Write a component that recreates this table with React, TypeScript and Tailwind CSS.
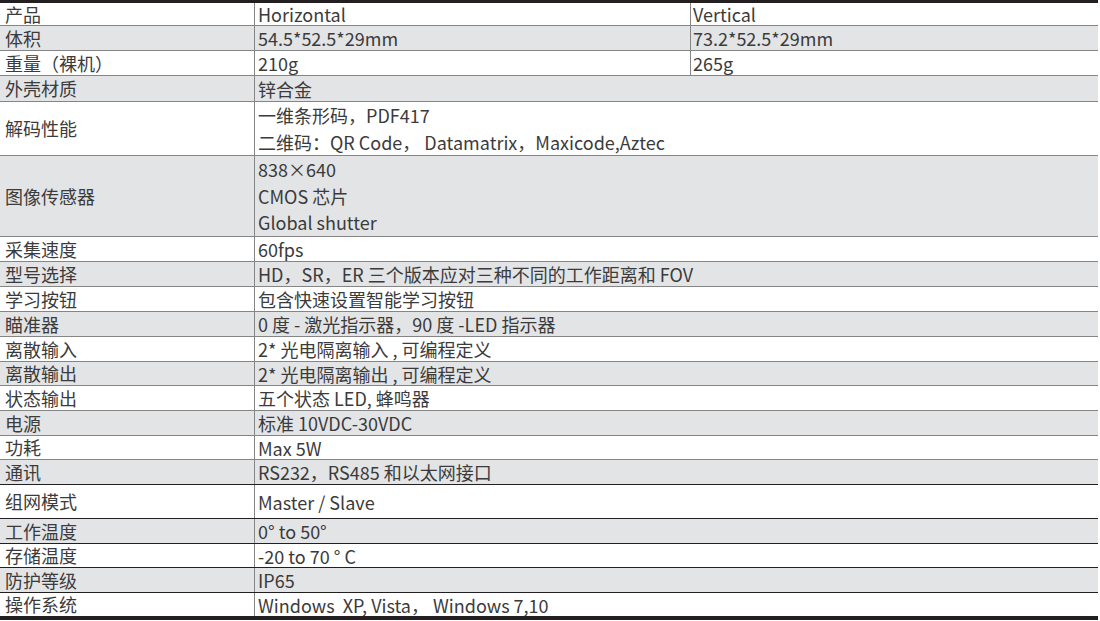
import React from 'react';

type Row = {
  label: string;
  cells: string[][];
  h: number;
  gray?: boolean;
  dark?: boolean;
};

const rows: Row[] = [
  { label: '产品', cells: [['Horizontal'], ['Vertical']], h: 23 },
  { label: '体积', cells: [['54.5*52.5*29mm'], ['73.2*52.5*29mm']], h: 25, gray: true },
  { label: '重量（裸机）', cells: [['210g'], ['265g']], h: 25 },
  { label: '外壳材质', cells: [['锌合金']], h: 26, gray: true },
  {
    label: '解码性能',
    cells: [['一维条形码，PDF417', '二维码：QR Code， Datamatrix，Maxicode,Aztec']],
    h: 54,
  },
  { label: '图像传感器', cells: [['838×640', 'CMOS 芯片', 'Global shutter']], h: 81, gray: true },
  { label: '采集速度', cells: [['60fps']], h: 25 },
  { label: '型号选择', cells: [['HD，SR，ER 三个版本应对三种不同的工作距离和 FOV']], h: 25, gray: true },
  { label: '学习按钮', cells: [['包含快速设置智能学习按钮']], h: 25 },
  { label: '瞄准器', cells: [['0 度 - 激光指示器，90 度 -LED 指示器']], h: 25, gray: true },
  { label: '离散输入', cells: [['2* 光电隔离输入 , 可编程定义']], h: 25 },
  { label: '离散输出', cells: [['2* 光电隔离输出 , 可编程定义']], h: 24, gray: true },
  { label: '状态输出', cells: [['五个状态 LED, 蜂鸣器']], h: 25 },
  { label: '电源', cells: [['标准 10VDC-30VDC']], h: 25, gray: true },
  { label: '功耗', cells: [['Max 5W']], h: 24 },
  { label: '通讯', cells: [['RS232，RS485 和以太网接口']], h: 25, gray: true, dark: true },
  { label: '组网模式', cells: [['Master / Slave']], h: 34, dark: true },
  { label: '工作温度', cells: [['0° to 50°']], h: 25, gray: true, dark: true },
  { label: '存储温度', cells: [['-20 to 70 ° C']], h: 24, dark: true },
  { label: '防护等级', cells: [['IP65']], h: 25, gray: true, dark: true },
  { label: '操作系统', cells: [['Windows  XP, Vista， Windows 7,10']], h: 23 },
];

function Lines({ lines }: { lines: string[] }) {
  return (
    <div className={lines.length > 1 ? 'leading-[26.5px]' : 'leading-[22px]'}>
      {lines.map((l) => (
        <div key={l} className="whitespace-pre">
          {l}
        </div>
      ))}
    </div>
  );
}

export default function App() {
  return (
    <div
      className="w-[1100px] h-[621px] bg-white text-[18px] text-[#3b3b3b]"
      style={{ fontFamily: '"Noto Sans CJK SC", "Noto Sans", sans-serif' }}
    >
      <div className="w-[1098px] border-t-[3px] border-b-4 border-[#231f20]">
        {rows.map((r, i) => {
          const last = i === rows.length - 1;
          return (
            <div
              key={r.label}
              className={`flex box-border ${r.gray ? 'bg-[#e3e4e6]' : 'bg-white'} ${
                last ? '' : r.dark ? 'border-b border-[#231f20]' : 'border-b border-[#858585]'
              }`}
              style={{ height: r.h }}
            >
              <div className="w-[255px] shrink-0 border-r border-[#858585] pl-[5px] flex items-center">
                {r.label}
              </div>
              {r.cells.length === 2 ? (
                <>
                  <div className="w-[436px] shrink-0 border-r border-[#858585] pl-[3px] flex items-center">
                    <Lines lines={r.cells[0]} />
                  </div>
                  <div className="flex-1 pl-[2px] flex items-center">
                    <Lines lines={r.cells[1]} />
                  </div>
                </>
              ) : (
                <div className="flex-1 pl-[3px] flex items-center">
                  <Lines lines={r.cells[0]} />
                </div>
              )}
            </div>
          );
        })}
      </div>
    </div>
  );
}
